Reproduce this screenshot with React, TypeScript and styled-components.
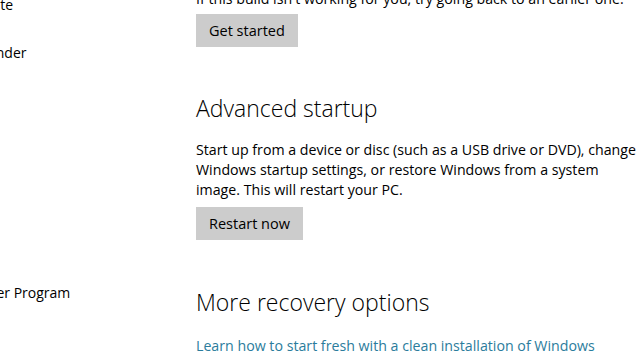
import * as React from 'react'
import styled, { createGlobalStyle } from 'styled-components'

const GlobalStyle = createGlobalStyle`
  html, body {
    margin: 0;
    padding: 0;
    background: #ffffff;
    overflow: hidden;
  }
  body {
    font-family: 'Open Sans', 'Noto Sans', sans-serif;
    color: #000000;
  }
`

const Page = styled.div`
  width: 640px;
  height: 360px;
  overflow: hidden;
  display: flex;
  align-items: flex-start;
`

// the settings pane is scrolled a little, so the first line sits above the top edge
const Scroller = styled.div`
  display: flex;
  align-items: flex-start;
  margin-top: -11px;
`

const Nav = styled.nav`
  width: 294px;
  margin-left: -98px;
  flex-shrink: 0;
  display: flex;
  flex-direction: column;
  padding-top: 4px;
`

const NavItem = styled.div`
  height: 48px;
  line-height: 20px;
  padding-top: 2px;
  box-sizing: border-box;
  font-size: 14px;
  white-space: nowrap;
`

const Content = styled.main`
  display: flex;
  flex-direction: column;
  align-items: flex-start;
  width: 460px;
`

const Paragraph = styled.p<{ $top?: number }>`
  margin: ${p => p.$top ?? 0}px 0 0 0;
  font-size: 14.2px;
  line-height: 20px;
  white-space: nowrap;
`

const Button = styled.button<{ $top?: number }>`
  margin-top: ${p => p.$top ?? 6}px;
  height: 33px;
  padding: 0 13px;
  border: none;
  background: #cccccc;
  color: #000000;
  font-family: inherit;
  font-size: 14.5px;
  cursor: pointer;
`

const Heading = styled.h2<{ $top: number }>`
  margin: ${p => p.$top}px 0 0 0;
  font-size: 23px;
  font-weight: 300;
  line-height: 32px;
  color: #000000;
`

const Link = styled.a`
  margin-top: 18px;
  font-size: 14.2px;
  line-height: 20px;
  color: #2b7c9c;
  text-decoration: none;
  white-space: nowrap;
`

const navItems = [
  'Windows Update',
  'Windows Defender',
  'Backup',
  'Recovery',
  'Activation',
  'For developers',
  'Windows Insider Program',
]

export default function App() {
  return (
    <Page>
      <GlobalStyle />
      <Scroller>
        <Nav>
          {navItems.map(item => (
            <NavItem key={item}>{item}</NavItem>
          ))}
        </Nav>
        <Content>
          <Paragraph>If this build isn't working for you, try going back to an earlier one.</Paragraph>
          <Button $top={5}>Get started</Button>
          <Heading $top={45}>Advanced startup</Heading>
          <Paragraph $top={16}>
            Start up from a device or disc (such as a USB drive or DVD), change
            <br />
            Windows startup settings, or restore Windows from a system
            <br />
            image. This will restart your PC.
          </Paragraph>
          <Button $top={7}>Restart now</Button>
          <Heading $top={46}>More recovery options</Heading>
          <Link href="#">Learn how to start fresh with a clean installation of Windows</Link>
        </Content>
      </Scroller>
    </Page>
  )
}
